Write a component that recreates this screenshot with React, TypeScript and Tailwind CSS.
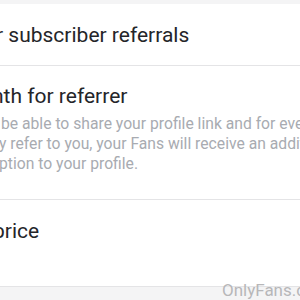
export default function App() {
  return (
    <div
      className="relative h-[300px] w-[300px] overflow-hidden bg-[#f4f4f5] text-[#242529]"
      style={{ fontFamily: "Roboto, 'Noto Sans', sans-serif" }}
    >
      <div className="mt-[4px] bg-white">
        {/* toggle row */}
        <div className="flex h-[62px] items-center border-b border-[#e4e4e6] pt-[3px]">
          <span className="-ml-[4px] whitespace-nowrap text-[21px]">r subscriber referrals</span>
        </div>

        {/* reward row */}
        <div className="flex h-[134px] flex-col border-b border-[#e4e4e6] pt-[16px]">
          <span className="-ml-[8px] whitespace-nowrap text-[21px] leading-[28px]">nth for referrer</span>
          <p className="mt-[4px] whitespace-nowrap text-[15.7px] leading-[20px] text-[#a8abb1]">
            <span className="ml-[1px] block">be able to share your profile link and for every</span>
            <span className="-ml-[1px] block">y refer to you, your Fans will receive an additional</span>
            <span className="-ml-[1px] block">ption to your profile.</span>
          </p>
        </div>

        {/* price row */}
        <div className="flex h-[87px] items-start border-b border-[#e4e4e6] pt-[17px]">
          <span className="-ml-[7px] whitespace-nowrap text-[21px] leading-[28px]">price</span>
        </div>
      </div>

      {/* watermark */}
      <span className="absolute left-[222px] top-[278px] whitespace-nowrap text-[17px] text-[#b7b7b9]">
        OnlyFans.com
      </span>
    </div>
  );
}
